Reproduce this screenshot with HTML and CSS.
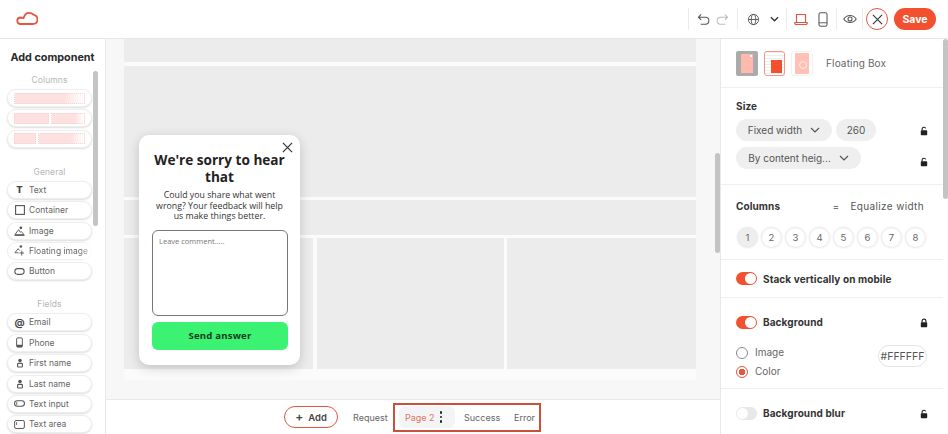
FILE: index.html
```html
<!DOCTYPE html>
<html lang="en">
<head>
<meta charset="utf-8">
<title>Floating Box editor</title>
<link rel="stylesheet" href="styles.css">
</head>
<body>
<svg class="defs" width="0" height="0" aria-hidden="true">
  <symbol id="lock" viewBox="0 0 10 12"><path d="M2.6 5.5V3.6a2.4 2.4 0 0 1 4.8 0v1.9" fill="none" stroke="#222" stroke-width="1.4"/><rect x="1" y="5" width="8" height="6.4" rx="1" fill="#222"/></symbol>
  <symbol id="unlock" viewBox="0 0 10 12"><path d="M2.6 5.5V3.6a2.4 2.4 0 0 1 4.6-.9" fill="none" stroke="#222" stroke-width="1.4"/><rect x="1" y="5" width="8" height="6.4" rx="1" fill="#222"/></symbol>
  <symbol id="chev" viewBox="0 0 10 6"><path d="M1 1l4 4 4-4" fill="none" stroke="#555" stroke-width="1.2"/></symbol>
  <symbol id="person" viewBox="0 0 10 12"><circle cx="5" cy="3" r="2.2" fill="#555"/><rect x="2" y="6.5" width="6" height="4.5" rx="1" fill="none" stroke="#555" stroke-width="1.4"/></symbol>
</svg>
<div class="app">
  <header class="topbar">
    <svg class="logo" viewBox="0 0 23 13" width="23" height="13"><path d="M5 12H18a4.600 4.600 0 0 0 .8-9.100C17.500 1.500 15.500.9 13.800.9 11 .9 9.500 3 8.500 6.200 7.500 5.800 6.500 5.500 5 5.500a3.300 3.300 0 0 0 0 6.500z" fill="none" stroke="#e2573f" stroke-width="1.800" stroke-linejoin="round"/></svg>
    <div class="tools">
      <div class="tool-group undo-group">
        <svg viewBox="0 0 14 14" width="13" height="13"><path d="M4.500 1.500L1.500 4.500l3 3M1.500 4.500H9a3.800 3.800 0 0 1 0 7.600H4" fill="none" stroke="#555" stroke-width="1.100"/></svg>
        <svg viewBox="0 0 14 14" width="13" height="13"><path d="M9.500 1.500l3 3-3 3M12.500 4.500H5a3.800 3.800 0 0 0 0 7.600h5" fill="none" stroke="#bbb" stroke-width="1.100"/></svg>
      </div>
      <div class="tool-group lang-group">
        <svg viewBox="0 0 14 14" width="13" height="13"><g fill="none" stroke="#555" stroke-width="1"><circle cx="7" cy="7" r="5.500"/><ellipse cx="7" cy="7" rx="2.400" ry="5.500"/><path d="M1.500 7h11"/></g></svg>
        <svg viewBox="0 0 10 6" width="9" height="6"><path d="M1 1l4 4 4-4" fill="none" stroke="#333" stroke-width="1.500"/></svg>
      </div>
      <div class="tool-group device-group">
        <svg viewBox="0 0 14 13" width="14" height="13"><path d="M2.500 1.500h9v8h-9z" fill="none" stroke="#e2573f" stroke-width="1.200"/><path d="M.8 9.500h12.400v.8a1.200 1.200 0 0 1-1.200 1.200H2a1.200 1.200 0 0 1-1.200-1.200z" fill="none" stroke="#e2573f" stroke-width="1.200"/></svg>
        <svg viewBox="0 0 10 16" width="10" height="15"><rect x=".7" y=".7" width="8.600" height="14.600" rx="2" fill="none" stroke="#555" stroke-width="1.100"/><path d="M.7 11.500h8.600" stroke="#555" stroke-width="1"/></svg>
      </div>
      <div class="tool-group eye-group">
        <svg viewBox="0 0 14 10" width="14" height="10"><path d="M.8 5C3.800.3 10.200.3 13.200 5 10.200 9.700 3.800 9.700.8 5z" fill="none" stroke="#555" stroke-width="1.100"/><circle cx="7" cy="5" r="2" fill="none" stroke="#555" stroke-width="1.100"/></svg>
      </div>
      <div class="tool-group close-group">
        <span class="close-round"><svg viewBox="0 0 12 12" width="11" height="11"><path d="M1 1l10 10M11 1L1 11" stroke="#333" stroke-width="1.200"/></svg></span>
        <button class="save">Save</button>
      </div>
    </div>
  </header>

  <div class="main">
    <aside class="components">
      <h2 class="comp-title">Add component</h2>
      <div class="comp-body">
        <div class="comp-list">
          <p class="comp-label">Columns</p>
          <div class="comp-item cols"><i class="cell"></i></div>
          <div class="comp-item cols"><i class="cell"></i><i class="cell"></i></div>
          <div class="comp-item cols"><i class="cell narrow"></i><i class="cell"></i></div>
          <p class="comp-label next">General</p>
          <div class="comp-item"><span class="ci ci-t">T</span>Text</div>
          <div class="comp-item"><span class="ci"><svg viewBox="0 0 10 10" width="10" height="10"><rect x=".6" y=".6" width="8.800" height="8.800" fill="none" stroke="#555" stroke-width="1.100"/></svg></span>Container</div>
          <div class="comp-item"><span class="ci"><svg viewBox="0 0 12 11" width="11" height="10"><circle cx="7.500" cy="2" r="1.500" fill="#555"/><path d="M1 9.500L5 4l2 3 1-1 3 3.500zM.5 10.500h11" fill="none" stroke="#555" stroke-width="1"/></svg></span>Image</div>
          <div class="comp-item clip"><span class="ci"><svg viewBox="0 0 12 12" width="11" height="11"><circle cx="7.500" cy="1.700" r="1.400" fill="#555"/><path d="M1 8.500L4.500 4l1.500 2M1 8.500h4M8.500 6v5.500M6 8.700h5" fill="none" stroke="#555" stroke-width="1"/></svg></span>Floating image</div>
          <div class="comp-item"><span class="ci"><svg viewBox="0 0 12 8" width="11" height="7"><rect x=".7" y=".7" width="10.600" height="6.600" rx="3.200" fill="none" stroke="#555" stroke-width="1.200"/></svg></span>Button</div>
          <p class="comp-label next">Fields</p>
          <div class="comp-item"><span class="ci ci-at">@</span>Email</div>
          <div class="comp-item"><span class="ci"><svg viewBox="0 0 8 12" width="7" height="11"><rect x=".7" y=".7" width="6.600" height="10.600" rx="1.400" fill="none" stroke="#555" stroke-width="1.100"/><path d="M1 8.500h6v2.500H1z" fill="#555"/></svg></span>Phone</div>
          <div class="comp-item"><span class="ci"><svg width="8" height="10"><use href="#person"/></svg></span>First name</div>
          <div class="comp-item"><span class="ci"><svg width="8" height="10"><use href="#person"/></svg></span>Last name</div>
          <div class="comp-item"><span class="ci"><svg viewBox="0 0 12 7" width="11" height="7"><rect x=".6" y=".6" width="10.800" height="5.800" rx="2.900" fill="none" stroke="#555" stroke-width="1.100"/><path d="M3 2v3" stroke="#555"/></svg></span>Text input</div>
          <div class="comp-item"><span class="ci"><svg viewBox="0 0 12 10" width="11" height="9"><rect x=".6" y=".6" width="10.800" height="8.800" rx="1.600" fill="none" stroke="#555" stroke-width="1.100"/><path d="M2.800 2.500v3" stroke="#555"/></svg></span>Text area</div>
        </div>
        <div class="comp-track"><span class="comp-thumb"></span></div>
      </div>
    </aside>

    <section class="workspace">
      <div class="canvas-row">
        <div class="canvas">
          <div class="block b1"></div>
          <div class="block b2"></div>
          <div class="block b3"></div>
          <div class="three">
            <div class="block"></div>
            <div class="block"></div>
            <div class="block"></div>
          </div>
          <div class="canvas-foot"></div>
          <div class="popup">
            <svg class="popup-x" viewBox="0 0 12 12" width="11" height="11"><path d="M1 1l10 10M11 1L1 11" stroke="#333" stroke-width="1.300"/></svg>
            <h3 class="popup-title">We're sorry to hear that</h3>
            <p class="popup-text">Could you share what went wrong? Your feedback will help us make things better.</p>
            <div class="popup-area">Leave comment.....</div>
            <div class="popup-send">Send answer</div>
          </div>
        </div>
        <div class="canvas-track"><span class="canvas-thumb"></span></div>
      </div>
      <nav class="pages">
        <button class="add"><span class="plus">+</span>Add</button>
        <span class="page first">Request</span>
        <div class="page-box">
          <span class="page active">Page 2<span class="dots"><i></i><i></i><i></i></span></span>
          <span class="page">Success</span>
          <span class="page">Error</span>
        </div>
      </nav>
    </section>

    <aside class="props">
      <div class="props-inner">
        <section class="sec sec-type">
          <span class="thumb t-a"><i></i></span>
          <span class="thumb t-b"><i></i></span>
          <span class="thumb t-c"><i></i></span>
          <span class="type-name">Floating Box</span>
        </section>
        <section class="sec sec-size">
          <h4 class="h">Size</h4>
          <div class="row">
            <span class="pill w96">Fixed width<svg width="10" height="6"><use href="#chev"/></svg></span>
            <span class="pill w40">260</span>
            <svg class="lock" width="8" height="10"><use href="#unlock"/></svg>
          </div>
          <div class="row r2">
            <span class="pill w125">By content heig...<svg width="10" height="6"><use href="#chev"/></svg></span>
            <svg class="lock" width="8" height="10"><use href="#unlock"/></svg>
          </div>
        </section>
        <section class="sec sec-cols">
          <div class="cols-head"><h4 class="h">Columns</h4><span class="eq"><b>=</b>Equalize width</span></div>
          <div class="nums">
            <span class="num on">1</span><span class="num">2</span><span class="num">3</span><span class="num">4</span><span class="num">5</span><span class="num">6</span><span class="num">7</span><span class="num">8</span>
          </div>
        </section>
        <section class="sec sec-stack">
          <div class="tog-row"><span class="toggle on"></span><h4 class="h">Stack vertically on mobile</h4></div>
        </section>
        <section class="sec sec-bg">
          <div class="tog-row"><span class="toggle on"></span><h4 class="h">Background</h4><svg class="lock" width="8" height="10"><use href="#lock"/></svg></div>
          <div class="bg-opts">
            <div class="radios">
              <label class="radio"><span class="dot"></span>Image</label>
              <label class="radio"><span class="dot sel"></span>Color</label>
            </div>
            <span class="hex">#FFFFFF</span>
          </div>
        </section>
        <section class="sec sec-blur">
          <div class="tog-row"><span class="toggle"></span><h4 class="h">Background blur</h4><svg class="lock" width="8" height="10"><use href="#unlock"/></svg></div>
        </section>
      </div>
      <div class="props-track"><span class="props-thumb"></span></div>
    </aside>
  </div>
</div>
</body>
</html>
```

FILE: styles.css
```css
* { box-sizing: border-box; }
html, body { margin: 0; height: 100%; }
body { font-family: Inter, "Liberation Sans", sans-serif; color: #555; background: #fff; overflow: hidden; }
.defs { position: absolute; }
.app { width: 948px; height: 434px; display: flex; flex-direction: column; overflow: hidden; }

.topbar { height: 39px; flex: none; display: flex; align-items: center; border-bottom: 1px solid #e6e6e6; padding: 0 12px 0 15px; justify-content: space-between; }
.logo { display: block; margin-top: -1px; }
.tools { display: flex; align-items: center; height: 22px; }
.tool-group { display: flex; align-items: center; height: 22px; border-left: 1px solid #ececec; }
.undo-group { width: 49px; padding-left: 8px; gap: 6px; }
.lang-group { width: 49px; padding-left: 9px; gap: 10px; }
.device-group { width: 50px; padding-left: 7px; gap: 10px; }
.eye-group { width: 26px; padding-left: 6px; }
.close-group { padding-left: 3px; gap: 6px; }
.close-round { width: 22px; height: 22px; border: 1px solid #e2573f; border-radius: 50%; display: flex; align-items: center; justify-content: center; }
.save { width: 42px; height: 22px; border: 0; border-radius: 11px; background: #f2502f; color: #fff; font: 700 10.500px Inter, sans-serif; padding: 0; }

.main { flex: 1; display: flex; min-height: 0; }

.components { width: 106px; flex: none; border-right: 1px solid #e8e8e8; display: flex; flex-direction: column; overflow: hidden; }
.comp-title { margin: 12px 0 0; font-size: 10.800px; line-height: 13px; font-weight: 700; color: #2a2a2a; text-align: center; }
.comp-body { position: relative; flex: 1; min-height: 0; overflow: hidden; }
.comp-list { width: 85px; margin: 11px 0 0 7px; }
.comp-label { margin: 0 0 3px; font-size: 8.500px; line-height: 11px; color: #b5b5b5; text-align: center; letter-spacing: .1px; }
.comp-label.next { margin-top: 19px; }
.comp-item { height: 18px; margin-bottom: 2.400px; border: 1px solid #eee; border-radius: 9px; background: #fff; box-shadow: 0 1px 2px rgba(0,0,0,.14); display: flex; align-items: center; font-size: 8.500px; color: #666; padding-left: 5px; white-space: nowrap; overflow: hidden; }
.comp-item.clip { -webkit-mask-image: linear-gradient(90deg, #000 85%, rgba(0,0,0,.3) 98%); mask-image: linear-gradient(90deg, #000 85%, rgba(0,0,0,.3) 98%); }
.comp-item.cols { gap: 2px; padding: 0 6px; }
.cell { flex: 1; height: 11px; background: #fde0e0; border: 1px dotted #f9cfcf; }
.cell.narrow { flex: 0 0 22px; }
.comp-item.cols .cell:last-child { background: linear-gradient(90deg, #fde0e0 70%, #fff 100%); border-right-color: transparent; }
.ci { width: 13px; margin-right: 3px; display: flex; justify-content: center; align-items: center; flex: none; color: #444; }
.ci-t { font-weight: 800; font-size: 9.500px; }
.ci-at { font-weight: 700; font-size: 10px; }
.comp-track { position: absolute; left: 93px; top: 7px; width: 5px; height: 155px; }
.comp-thumb { display: block; height: 100%; background: #c4c4c4; border-radius: 3px; }

.workspace { width: 614px; flex: none; display: flex; flex-direction: column; background: #f7f7f7; }
.canvas-row { flex: 1; min-height: 0; display: flex; }
.canvas { position: relative; width: 572px; margin-left: 18px; height: 341px; background: #fbfbfb; }
.block { background: #ececec; }
.b1 { height: 23px; }
.b2 { height: 131px; margin-top: 4px; }
.b3 { height: 35px; margin-top: 3px; }
.three { display: grid; grid-template-columns: 189px 187px 189px; justify-content: space-between; margin-top: 3px; height: 131px; }
.canvas-foot { height: 11px; }
.canvas::before { content: ""; position: absolute; inset: 0 0 11px; background: #fff; z-index: -1; }
.canvas-track { flex: 1; position: relative; }
.canvas-thumb { position: absolute; left: 19px; top: 114px; width: 5px; height: 100px; background: #c4c4c4; border-radius: 3px; }

.popup { position: absolute; left: 15px; top: 96px; width: 161px; height: 230px; background: #fff; border-radius: 10px; box-shadow: 0 3px 12px rgba(0,0,0,.18); padding: 16px 13px 0; font-family: "Open Sans", sans-serif; text-align: center; }
.popup-x { position: absolute; right: 7px; top: 7px; }
.popup-title { margin: 0; font-size: 13.600px; line-height: 17px; font-weight: 700; color: #222; }
.popup-text { margin: 5px 0 0; font-size: 8.800px; line-height: 10.500px; color: #333; }
.popup-area { margin-top: 8px; height: 86px; width: 136px; border: 1px solid #777; border-radius: 6px; text-align: left; padding: 5px 6px; font-size: 7.500px; line-height: 11px; color: #777; }
.popup-send { margin-top: 6px; height: 28px; width: 136px; background: #3bf272; border-radius: 6px; display: flex; align-items: center; justify-content: center; font-weight: 700; font-size: 9.600px; color: #0f3d20; letter-spacing: .2px; }

.pages { height: 35px; flex: none; background: #fff; border-top: 1px solid #e8e8e8; display: flex; align-items: center; padding-left: 178px; font-size: 9px; color: #666; }
.add { width: 54px; height: 22px; border: 1px solid #e2573f; border-radius: 11px; background: #fff; font: 600 9.500px Inter, sans-serif; color: #444; display: flex; align-items: center; justify-content: center; padding: 0; }
.plus { font-size: 12px; margin-right: 5px; font-weight: 600; line-height: 1; }
.page { white-space: nowrap; }
.page.first { margin-left: 15px; width: 40px; }
.page-box { width: 148px; height: 29px; border: 2px solid #c9503a; display: flex; align-items: center; padding-left: 4px; }
.page.active { width: 56px; height: 22px; background: #f3f4f6; border-radius: 6px; color: #e2735f; display: flex; align-items: center; padding-left: 6px; margin-right: 9px; }
.page-box .page:nth-child(2) { width: 50px; }
.dots { display: flex; flex-direction: column; gap: 2px; margin-left: 5px; }
.dots i { width: 2.500px; height: 2.500px; border-radius: 50%; background: #222; }

.props { flex: 1; position: relative; border-left: 1px solid #e8e8e8; overflow: hidden; }
.props-inner { width: 222px; color: #555; }
.sec { border-bottom: 1px solid #efefef; padding-left: 15px; }
.sec-type { height: 49px; display: flex; align-items: center; gap: 6px; }
.thumb { width: 22px; height: 25px; flex: none; position: relative; border-radius: 2px; }
.thumb i { position: absolute; }
.t-a { background: #ababab; }
.t-a i { inset: 3px 5px; background: #ffb9ad; }
.t-a i::after { content: ""; position: absolute; right: 1px; top: 1px; width: 2px; height: 2px; background: #fff; }
.t-b { width: 21px; background: repeating-linear-gradient(180deg, #eee 0 1px, #fff 1px 3px); border: 1px solid #f09a88; border-radius: 3px; }
.t-b i { right: 2px; bottom: 2px; width: 11px; height: 13px; background: #f2502f; }
.t-c { background: #fff; border: 1px solid #f5f0ef; border-radius: 3px; }
.t-c i { inset: 1px 3px; background: #ffc1b6; }
.t-c i::after { content: ""; position: absolute; left: 4px; top: 8px; width: 6px; height: 6px; border: 1px solid #ffeae6; border-radius: 50%; }
.type-name { margin-left: 7px; font-size: 10px; color: #666; letter-spacing: .15px; }
.h { margin: 0; font-size: 10px; line-height: 12px; font-weight: 700; color: #333; letter-spacing: .1px; }
.sec-size { height: 97px; padding-top: 12px; }
.row { display: flex; align-items: center; gap: 4px; margin-top: 7px; position: relative; height: 22px; }
.row.r2 { margin-top: 6px; }
.pill { height: 22px; border-radius: 11px; background: #efefef; display: flex; align-items: center; justify-content: center; gap: 8px; font-size: 10px; color: #555; white-space: nowrap; }
.w96 { width: 96px; }
.w40 { width: 40px; }
.w125 { width: 125px; }
.lock { position: absolute; left: 184px; top: 50%; margin-top: -4px; }
.r2 .lock { margin-top: -1px; }
.sec-cols { height: 75px; padding-top: 15px; }
.cols-head { display: flex; align-items: center; }
.eq { margin-left: auto; margin-right: 19px; font-size: 10px; display: flex; gap: 11px; letter-spacing: .36px; white-space: nowrap; }
.eq b { font-weight: 400; }
.nums { display: flex; gap: 5px; margin: 16px 0 0 2px; }
.num { width: 19px; height: 19px; border-radius: 50%; background: #fff; box-shadow: 0 0 3px rgba(0,0,0,.22); display: flex; align-items: center; justify-content: center; font-size: 9.500px; color: #666; }
.num.on { background: #eee; }
.sec-stack { height: 38px; display: flex; align-items: center; }
.tog-row { display: flex; align-items: center; gap: 6px; position: relative; height: 14px; }
.toggle { width: 21px; height: 13px; border-radius: 7px; background: #e8e8e8; position: relative; flex: none; }
.toggle::after { content: ""; position: absolute; left: 1px; top: 1px; width: 11px; height: 11px; border-radius: 50%; background: #fff; }
.toggle.on { background: #f2502f; }
.toggle.on::after { left: 9px; }
.sec-bg { height: 91px; padding-top: 17px; }
.bg-opts { display: flex; justify-content: space-between; margin-top: 16px; padding-right: 16px; }
.radios { display: flex; flex-direction: column; gap: 6px; padding-top: 1px; }
.radio { display: flex; align-items: center; gap: 7px; font-size: 10px; line-height: 13px; color: #666; }
.dot { width: 12px; height: 12px; border: 1px solid #888; border-radius: 50%; }
.dot.sel { border-color: #e2573f; background: radial-gradient(circle, #e2573f 0 3px, #fff 3.500px); }
.hex { width: 49px; height: 22px; border: 1px solid #e4e4e4; border-radius: 11px; font-size: 10.500px; color: #555; display: flex; align-items: center; justify-content: center; white-space: nowrap; overflow: hidden; }
.sec-blur { border-bottom: 0; padding-top: 17px; }
.props-track { position: absolute; right: 0; top: 0; width: 5px; height: 100%; }
.props-thumb { display: block; width: 5px; height: 160px; background: #c4c4c4; border-radius: 3px; }
```
